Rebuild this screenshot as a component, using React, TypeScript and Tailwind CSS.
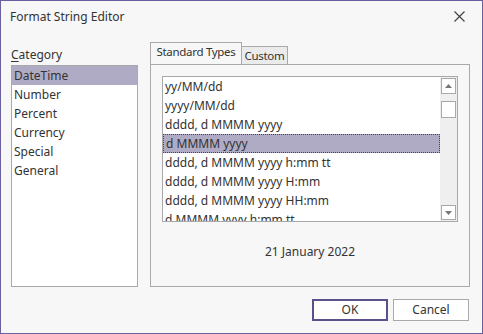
import React from "react";

const categories = ["DateTime", "Number", "Percent", "Currency", "Special", "General"];
const formats = [
  "yy/MM/dd",
  "yyyy/MM/dd",
  "dddd, d MMMM yyyy",
  "d MMMM yyyy",
  "dddd, d MMMM yyyy h:mm tt",
  "dddd, d MMMM yyyy H:mm",
  "dddd, d MMMM yyyy HH:mm",
  "d MMMM yyyy h:mm tt",
];

export default function App() {
  return (
    <div
      className="w-[483px] h-[334px] border border-[#6a5f9f] bg-[#f7f7f7] text-[12px] text-[#333333] flex flex-col overflow-hidden"
      style={{ fontFamily: '"Noto Sans", "Open Sans", sans-serif' }}
    >
      {/* Title bar */}
      <div className="h-[31px] flex items-center justify-between pl-[9px] pr-[17px] shrink-0">
        <span className="leading-none">Format String Editor</span>
        <svg width="11" height="11" viewBox="0 0 11 11">
          <path d="M0.5 0.5 L10.5 10.5 M10.5 0.5 L0.5 10.5" stroke="#444" strokeWidth="1.2" />
        </svg>
      </div>

      {/* Main */}
      <div className="flex pl-[10px] pr-[12px] gap-[12px]">
        {/* Category */}
        <div className="w-[127px] flex flex-col">
          <div className="h-[33px] flex items-end pb-[4px] leading-none">
            <span>
              <span className="underline underline-offset-2">C</span>ategory
            </span>
          </div>
          <div className="h-[222px] border border-[#a9a9a9] bg-white">
            {categories.map((c, i) => (
              <div
                key={c}
                className={`h-[19px] flex items-center pl-[2px] ${i === 0 ? "bg-[#b0abc4]" : ""}`}
              >
                {c}
              </div>
            ))}
          </div>
        </div>

        {/* Tabs */}
        <div className="flex-1 flex flex-col pt-[11px]">
          <div className="flex items-end h-[21px] relative z-10">
            <div className="h-[22px] w-[92px] border border-b-0 border-[#a9a9a9] bg-[#f7f7f7] flex items-center justify-center pb-[3px] whitespace-nowrap text-[11.5px] tracking-[-0.3px]">
              Standard Types
            </div>
            <div className="h-[18px] w-[46px] border border-l-0 border-b-0 border-[#a9a9a9] bg-[#ebebeb] flex items-center justify-center whitespace-nowrap text-[11.5px] tracking-[-0.3px]">
              Custom
            </div>
          </div>
          <div className="h-[223px] border border-[#a9a9a9] flex flex-col items-center pt-[11px]">
            <div className="w-[296px] h-[146px] border border-[#a9a9a9] bg-white flex overflow-hidden">
              <div className="flex-1 overflow-hidden">
                {formats.map((f, i) => (
                  <div
                    key={f}
                    className={`h-[19px] shrink-0 flex items-center pl-[2px] whitespace-nowrap ${
                      i === 3 ? "bg-[#b0abc4] border border-dotted border-[#444]" : ""
                    }`}
                  >
                    {f}
                  </div>
                ))}
              </div>
              <div className="w-[17px] bg-[#efefef] flex flex-col items-center pt-[1px] pb-[1px]">
                <div className="w-[15px] h-[16px] border border-[#a9a9a9] bg-white flex items-center justify-center">
                  <svg width="7" height="4" viewBox="0 0 7 4">
                    <path d="M3.5 0 L7 4 L0 4 Z" fill="#777" />
                  </svg>
                </div>
                <div className="w-[15px] h-[17px] border border-[#a9a9a9] bg-white mt-[7px]" />
                <div className="flex-1" />
                <div className="w-[15px] h-[15px] border border-[#a9a9a9] bg-white flex items-center justify-center">
                  <svg width="7" height="4" viewBox="0 0 7 4">
                    <path d="M0 0 L7 0 L3.5 4 Z" fill="#777" />
                  </svg>
                </div>
              </div>
            </div>
            <div className="mt-[24px] leading-none">21 January 2022</div>
          </div>
        </div>
      </div>

      {/* Buttons */}
      <div className="flex justify-end gap-[5px] pr-[13px] mt-[12px]">
        <div className="w-[76px] h-[22px] border-2 border-[#5b5089] bg-white flex items-center justify-center">
          OK
        </div>
        <div className="w-[76px] h-[22px] border border-[#a9a9a9] bg-white flex items-center justify-center">
          Cancel
        </div>
      </div>
    </div>
  );
}
